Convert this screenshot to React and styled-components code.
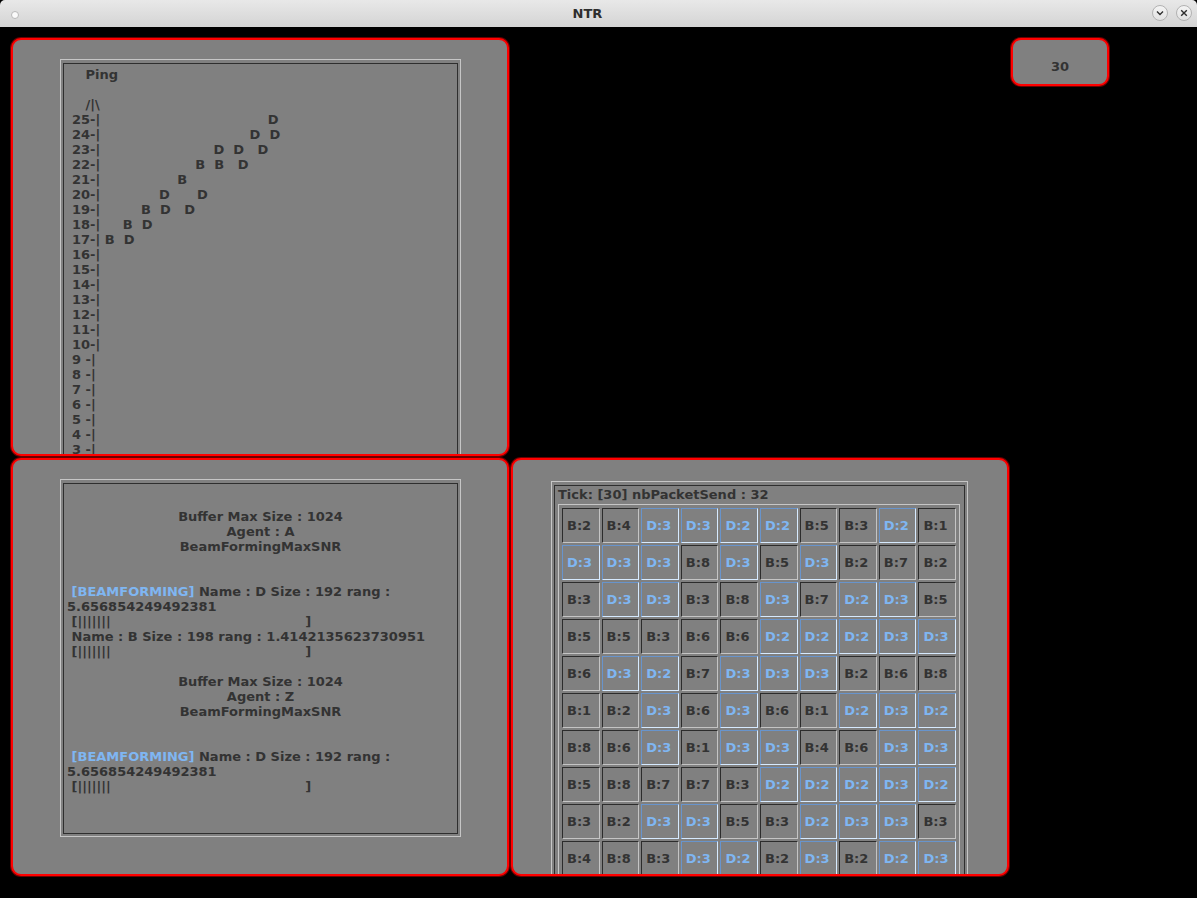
import React from "react";
import styled, { createGlobalStyle } from "styled-components";

const GlobalStyle = createGlobalStyle`
  html, body {
    margin: 0;
    padding: 0;
    background: #000;
  }
  body {
    font-family: "DejaVu Sans", "Liberation Sans", sans-serif;
  }
`;

const sp = (n) => " ".repeat(n);

const pingRows = [
  "   Ping",
  "",
  "   /|\\",
  "25-|" + sp(37) + "D",
  "24-|" + sp(33) + "D" + sp(2) + "D",
  "23-|" + sp(25) + "D" + sp(2) + "D" + sp(3) + "D",
  "22-|" + sp(21) + "B" + sp(2) + "B" + sp(3) + "D",
  "21-|" + sp(17) + "B",
  "20-|" + sp(13) + "D" + sp(6) + "D",
  "19-|" + sp(9) + "B" + sp(2) + "D" + sp(3) + "D",
  "18-|" + sp(5) + "B" + sp(2) + "D",
  "17-|" + sp(1) + "B" + sp(2) + "D",
  "16-|",
  "15-|",
  "14-|",
  "13-|",
  "12-|",
  "11-|",
  "10-|",
  "9 -|",
  "8 -|",
  "7 -|",
  "6 -|",
  "5 -|",
  "4 -|",
  "3 -|",
];

const cells = [
  "B:2 B:4 D:3 D:3 D:2 D:2 B:5 B:3 D:2 B:1",
  "D:3 D:3 D:3 B:8 D:3 B:5 D:3 B:2 B:7 B:2",
  "B:3 D:3 D:3 B:3 B:8 D:3 B:7 D:2 D:3 B:5",
  "B:5 B:5 B:3 B:6 B:6 D:2 D:2 D:2 D:3 D:3",
  "B:6 D:3 D:2 B:7 D:3 D:3 D:3 B:2 B:6 B:8",
  "B:1 B:2 D:3 B:6 D:3 B:6 B:1 D:2 D:3 D:2",
  "B:8 B:6 D:3 B:1 D:3 D:3 B:4 B:6 D:3 D:3",
  "B:5 B:8 B:7 B:7 B:3 D:2 D:2 D:2 D:3 D:2",
  "B:3 B:2 D:3 D:3 B:5 B:3 D:2 D:3 D:3 B:3",
  "B:4 B:8 B:3 D:3 D:2 B:2 D:3 B:2 D:2 D:3",
].flatMap((r) => r.split(" "));

const bar = " [|||||||" + sp(43) + "]";

const App = () => {
  return (
    <>
      <GlobalStyle />
      <Window>
        <TitleBar>
          <Dot />
          <Title>NTR</Title>
          <Buttons>
            <RoundBtn>
              <svg width="16" height="16" viewBox="0 0 16 16">
                <polyline points="5,6.5 8,9.5 11,6.5" fill="none" stroke="#2e2e2e" strokeWidth="1.4" />
              </svg>
            </RoundBtn>
            <RoundBtn>
              <svg width="16" height="16" viewBox="0 0 16 16">
                <path d="M5.2 5.2 L10.8 10.8 M10.8 5.2 L5.2 10.8" stroke="#2e2e2e" strokeWidth="1.4" />
              </svg>
            </RoundBtn>
          </Buttons>
        </TitleBar>

        <Desktop>
          <Panel $col={1} $row={1} $pad="19px 0 0 47px">
            <Frame $w={401}>
              <FrameInner>
                <PingText>{pingRows.join("\n")}</PingText>
              </FrameInner>
            </Frame>
          </Panel>

          <Counter>30</Counter>

          <Panel $col={1} $row={2} $pad="19px 0 0 47px">
            <Frame $w={401} $h={358}>
              <FrameInner>
                <Info>
                  <Center>Buffer Max Size : 1024</Center>
                  <Center>Agent : A</Center>
                  <Center>BeamFormingMaxSNR</Center>
                  <Blank />
                  <Blank />
                  <Left>
                    {" "}
                    <Blue>[BEAMFORMING]</Blue> Name : D Size : 192 rang :
                  </Left>
                  <Left>5.656854249492381</Left>
                  <Left>{bar}</Left>
                  <Left> Name : B Size : 198 rang : 1.4142135623730951</Left>
                  <Left>{bar}</Left>
                  <Blank />
                  <Center>Buffer Max Size : 1024</Center>
                  <Center>Agent : Z</Center>
                  <Center>BeamFormingMaxSNR</Center>
                  <Blank />
                  <Blank />
                  <Left>
                    {" "}
                    <Blue>[BEAMFORMING]</Blue> Name : D Size : 192 rang :
                  </Left>
                  <Left>5.656854249492381</Left>
                  <Left>{bar}</Left>
                </Info>
              </FrameInner>
            </Frame>
          </Panel>

          <Panel $col={2} $row={2} $pad="21px 0 0 38px">
            <Frame $w={417}>
              <FrameInner>
                <Tick>Tick: [30] nbPacketSend : 32</Tick>
                <Grid>
                  {cells.map((c, i) => (
                    <Cell key={i} $d={c[0] === "D"}>
                      {c}
                    </Cell>
                  ))}
                </Grid>
              </FrameInner>
            </Frame>
          </Panel>
        </Desktop>
      </Window>
    </>
  );
};

export default App;

const Window = styled.div`
  width: 1197px;
  height: 898px;
  background: #000;
  overflow: hidden;
  font-family: "DejaVu Sans", "Liberation Sans", sans-serif;
`;

const TitleBar = styled.div`
  height: 27px;
  box-sizing: border-box;
  display: grid;
  grid-template-columns: 1fr auto 1fr;
  align-items: center;
  padding: 0 5px 1px 11px;
  background: linear-gradient(#e8e8e8, #d4d4d4);
  border-radius: 5px 5px 0 0;
`;

const Dot = styled.div`
  width: 6px;
  height: 6px;
  margin-top: 3px;
  border-radius: 50%;
  background: #fafafa;
  border: 1px solid #b8b8b8;
`;

const Title = styled.div`
  font-weight: bold;
  font-size: 13px;
  color: #2e2e2e;
  margin-right: 28px;
`;

const Buttons = styled.div`
  justify-self: end;
  display: flex;
  gap: 8px;
`;

const RoundBtn = styled.div`
  width: 16px;
  height: 16px;
  box-sizing: border-box;
  border-radius: 50%;
  border: 1px solid #b2b2b2;
  background: linear-gradient(#f4f4f4, #e2e2e2);
  display: flex;
  align-items: center;
  justify-content: center;
  svg {
    flex: none;
  }
`;

const Desktop = styled.div`
  display: grid;
  grid-template-columns: 500px 500px 100px;
  grid-template-rows: 420px 420px;
  padding: 10px 0 0 10px;
`;

const Panel = styled.div`
  grid-column: ${(p) => p.$col};
  grid-row: ${(p) => p.$row};
  margin: 1px;
  min-height: 0;
  border: 2px solid #ff0000;
  border-radius: 10px;
  box-shadow: 0 0 0 1px #6a0000;
  background: #808080;
  overflow: hidden;
  padding: ${(p) => p.$pad};
`;

const Counter = styled.div`
  grid-column: 3;
  grid-row: 1;
  align-self: start;
  height: 48px;
  box-sizing: border-box;
  margin: 1px;
  padding-top: 8px;
  border: 2px solid #ff0000;
  border-radius: 10px;
  box-shadow: 0 0 0 1px #6a0000;
  background: #808080;
  display: flex;
  align-items: center;
  justify-content: center;
  font-weight: bold;
  font-size: 13px;
  color: #333;
`;

const Frame = styled.div`
  width: ${(p) => p.$w}px;
  height: ${(p) => (p.$h ? `${p.$h}px` : "auto")};
  box-sizing: border-box;
  border: 1px solid #c6c6c6;
  padding: 3px 2px 2px 2px;
  display: flex;
`;

const FrameInner = styled.div`
  flex: 1;
  border: 1px solid #2e2e2e;
  display: flex;
  flex-direction: column;
`;

const PingText = styled.pre`
  margin: 0;
  padding: 3px 0 0 8px;
  font-family: "DejaVu Sans", "Liberation Sans", sans-serif;
  font-weight: bold;
  font-size: 13px;
  line-height: 15px;
  color: #333;
`;

const Info = styled.div`
  padding-top: 25px;
  font-weight: bold;
  font-size: 13px;
  line-height: 15px;
  color: #333;
`;

const Center = styled.div`
  text-align: center;
`;

const Left = styled.div`
  white-space: pre;
  padding-left: 3px;
`;

const Blank = styled.div`
  height: 15px;
`;

const Blue = styled.span`
  color: #7fb6f2;
`;

const Tick = styled.div`
  padding: 1px 0 0 3px;
  font-weight: bold;
  font-size: 13px;
  line-height: 15px;
  color: #333;
`;

const Grid = styled.div`
  width: 402px;
  box-sizing: border-box;
  margin: 2px 0 0 3px;
  border: 1px solid #c6c6c6;
  padding: 3px;
  display: grid;
  grid-template-columns: repeat(10, 1fr);
  grid-auto-rows: 35px;
  gap: 2px;
`;

const Cell = styled.div`
  box-sizing: border-box;
  border: 1px solid;
  border-color: ${(p) =>
    p.$d ? "#6894cc #d6eaff #d6eaff #6894cc" : "#2c2c2c #c4c4c4 #c4c4c4 #2c2c2c"};
  display: flex;
  align-items: center;
  padding-left: 4px;
  font-weight: bold;
  font-size: 13px;
  color: ${(p) => (p.$d ? "#7fb6f2" : "#333")};
`;
